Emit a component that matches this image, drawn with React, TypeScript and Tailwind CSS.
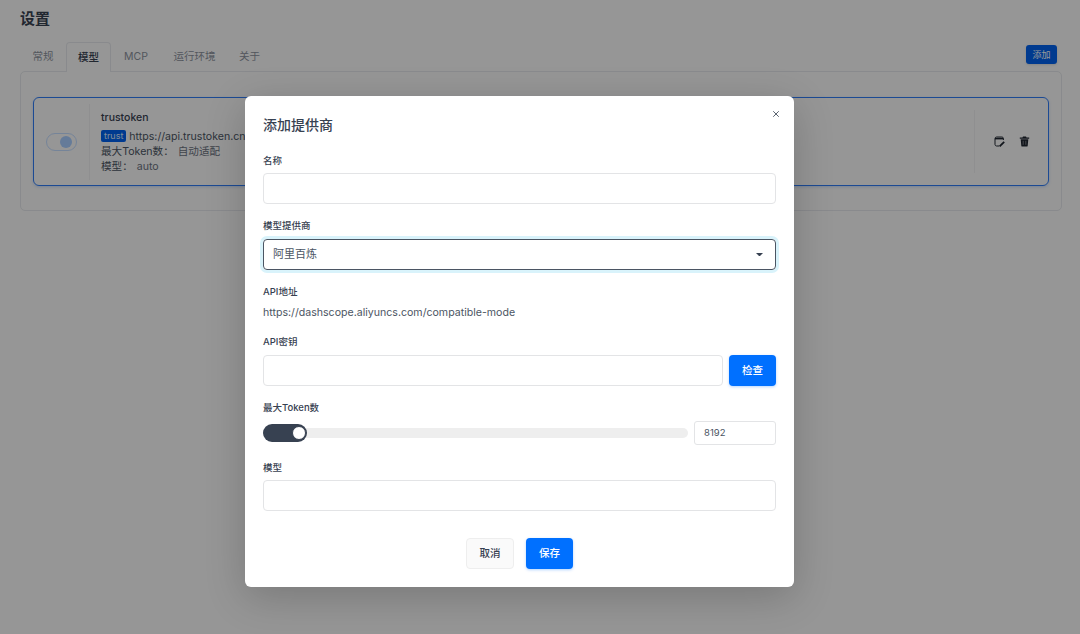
import { X } from "lucide-react";

const FONT = "[font-family:Inter,'Noto_Sans_CJK_SC',sans-serif]";

function Label({ children, className = "" }: { children: React.ReactNode; className?: string }) {
    return <div className={`h-[12px] text-[9.5px] leading-[12px] font-medium text-[#374151] ${className}`}>{children}</div>;
}

function TextBox({ className = "" }: { className?: string }) {
    return <div className={`h-[31px] rounded-[4px] border border-[#e3e4e6] bg-white ${className}`} />;
}

function EditIcon() {
    return (
        <svg width="11" height="11" viewBox="0 0 11 11" fill="none">
            <path d="M5 10H2.6C1.7 10 1 9.3 1 8.4V2.6C1 1.7 1.7 1 2.6 1h5.2C8.7 1 9.4 1.7 9.4 2.6V4" stroke="#1f2530" strokeWidth="1" />
            <path d="M1 2.6h8.4" stroke="#1f2530" strokeWidth="1.6" />
            <path d="M5.6 10.4 10.2 5.8" stroke="#1f2530" strokeWidth="1.8" />
        </svg>
    );
}

function TrashIcon() {
    return (
        <svg width="11" height="11" viewBox="0 0 11 11">
            <path d="M4 .6h3l.5 1H10.2v1.1H.8V1.6h2.7z" fill="#1f2530" />
            <path d="M1.7 3.3h7.6l-.6 6.4c0 .5-.5.9-1 .9H3.3c-.5 0-1-.4-1-.9z" fill="#1f2530" />
            <path d="M4.2 4.8v4M6.8 4.8v4" stroke="#8c8f94" strokeWidth=".8" />
        </svg>
    );
}

export default function App() {
    return (
        <div className={`relative h-[634px] w-[1080px] overflow-hidden bg-[#fafafa] ${FONT}`}>
            <div className="px-[20px] pt-[9px]">
                <h1 className="h-[20px] text-[15px] leading-[20px] font-semibold text-[#374151]">设置</h1>
                <div className="mt-[13px] flex h-[29px] items-end justify-between">
                    <div className="flex h-[29px] text-[10.5px] text-[#8b919c]">
                        <div className="flex w-[46px] items-center justify-center pt-[1px]">常规</div>
                        <div className="relative -mb-px flex h-[30px] w-[45px] items-center justify-center rounded-t-[4px] border border-b-0 border-[#e5e7eb] bg-[#fafafa] font-medium text-[#374151]">模型</div>
                        <div className="flex w-[50px] items-center justify-center pt-[1px]">MCP</div>
                        <div className="flex w-[67px] items-center justify-center pt-[1px]">运行环境</div>
                        <div className="flex w-[43px] items-center justify-center pt-[1px]">关于</div>
                    </div>
                    <div className="mr-[3px] mb-[7px] flex h-[19px] w-[31px] items-center justify-center rounded-[3px] bg-[#0062ee] text-[9px] text-white shadow-sm">添加</div>
                </div>
                <div className="h-[140px] w-[1042px] rounded-[5px] border border-[#e5e7eb] px-[12px] pt-[25px]">
                    <div className="flex h-[89px] items-center rounded-[6px] border border-[#2f7cf6] shadow-[0_1px_3px_rgba(47,124,246,.25)]">
                        <div className="flex w-[55px] justify-center">
                            <div className="flex h-[18px] w-[31px] items-center justify-end rounded-full border border-[#c4dcff] pr-[4px]">
                                <div className="h-[12px] w-[12px] rounded-full bg-[#a8cdff]" />
                            </div>
                        </div>
                        <div className="h-[76px] w-px bg-[#eeeff1]" />
                        <div className="ml-[11px] flex-1 text-[10.6px] leading-[15px] text-[#6b7280]">
                            <div className="mb-[4px] text-[10.5px] font-medium text-[#374151]">trustoken</div>
                            <div className="flex items-center gap-[3px]">
                                <span className="rounded-[2px] bg-[#0062ee] px-[3px] text-[9px] leading-[12px] text-[#dbe8ff]">trust</span>
                                <span className="text-[#4b5563]">https://api.trustoken.cn</span>
                            </div>
                            <div><span className="mr-[4px] text-[#4b5563]">最大Token数：</span>自动适配</div>
                            <div><span className="mr-[4px] text-[#4b5563]">模型：</span>auto</div>
                        </div>
                        <div className="h-[63px] w-px bg-[#eeeff1]" />
                        <div className="flex w-[73px] items-center justify-center gap-[14px]">
                            <EditIcon />
                            <TrashIcon />
                        </div>
                    </div>
                </div>
            </div>

            <div className="absolute inset-0 flex bg-black/40">
                <div className="mt-[96px] ml-[245px] h-[491px] w-[549px] rounded-[6px] bg-white px-[18px] pt-[20px] shadow-[0_10px_40px_rgba(0,0,0,.2)]">
                    <div className="flex items-start justify-between">
                        <h2 className="h-[18px] text-[14px] leading-[18px] font-medium text-[#374151]">添加提供商</h2>
                        <X size={10} strokeWidth={2.2} className="mt-[-7px] mr-[-5px] text-[#4b5563]" />
                    </div>
                    <Label className="mt-[21px]">名称</Label>
                    <TextBox className="mt-[6px]" />
                    <Label className="mt-[16px]">模型提供商</Label>
                    <div className="mt-[7px] flex h-[31px] items-center justify-between rounded-[4px] border border-[#4b5563] pr-[12px] pl-[9px] text-[11px] text-[#4b5563] shadow-[0_0_0_3px_#d9f3fb]">
                        <span>阿里百炼</span>
                        <svg width="7" height="3.5" viewBox="0 0 8 4"><path d="M0 0h8L4 4z" fill="#374151" /></svg>
                    </div>
                    <Label className="mt-[16px]">API地址</Label>
                    <div className="mt-[7px] h-[16px] text-[10.6px] leading-[16px] text-[#4b5563]">https://dashscope.aliyuncs.com/compatible-mode</div>
                    <Label className="mt-[15px]">API密钥</Label>
                    <div className="mt-[7px] flex gap-[6px]">
                        <TextBox className="flex-1" />
                        <div className="flex h-[31px] w-[47px] items-center justify-center rounded-[4px] bg-[#0070ff] text-[10.5px] font-medium text-white shadow-[0_1px_3px_rgba(0,112,255,.3)]">检查</div>
                    </div>
                    <Label className="mt-[16px]">最大Token数</Label>
                    <div className="mt-[7px] flex items-center gap-[6px]">
                        <div className="relative h-[10px] flex-1 rounded-full bg-[#eeeeee]">
                            <div className="absolute top-[-4px] left-0 flex h-[18px] w-[44px] items-center justify-end rounded-full bg-[#374151] pr-[1px]">
                                <div className="h-[14px] w-[14px] rounded-full border border-[#374151] bg-white" />
                            </div>
                        </div>
                        <div className="flex h-[24px] w-[82px] items-center rounded-[3px] border border-[#e3e4e6] pl-[9px] text-[9.5px] text-[#4b5563]">8192</div>
                    </div>
                    <Label className="mt-[17px]">模型</Label>
                    <TextBox className="mt-[6px]" />
                    <div className="mt-[27px] flex justify-center gap-[12px]">
                        <div className="flex h-[31px] w-[48px] items-center justify-center rounded-[4px] border border-[#eeeeee] bg-[#fafafa] text-[10.5px] font-medium text-[#374151]">取消</div>
                        <div className="flex h-[31px] w-[47px] items-center justify-center rounded-[4px] bg-[#0070ff] text-[10.5px] font-medium text-white shadow-[0_1px_3px_rgba(0,112,255,.3)]">保存</div>
                    </div>
                </div>
            </div>
        </div>
    );
}
